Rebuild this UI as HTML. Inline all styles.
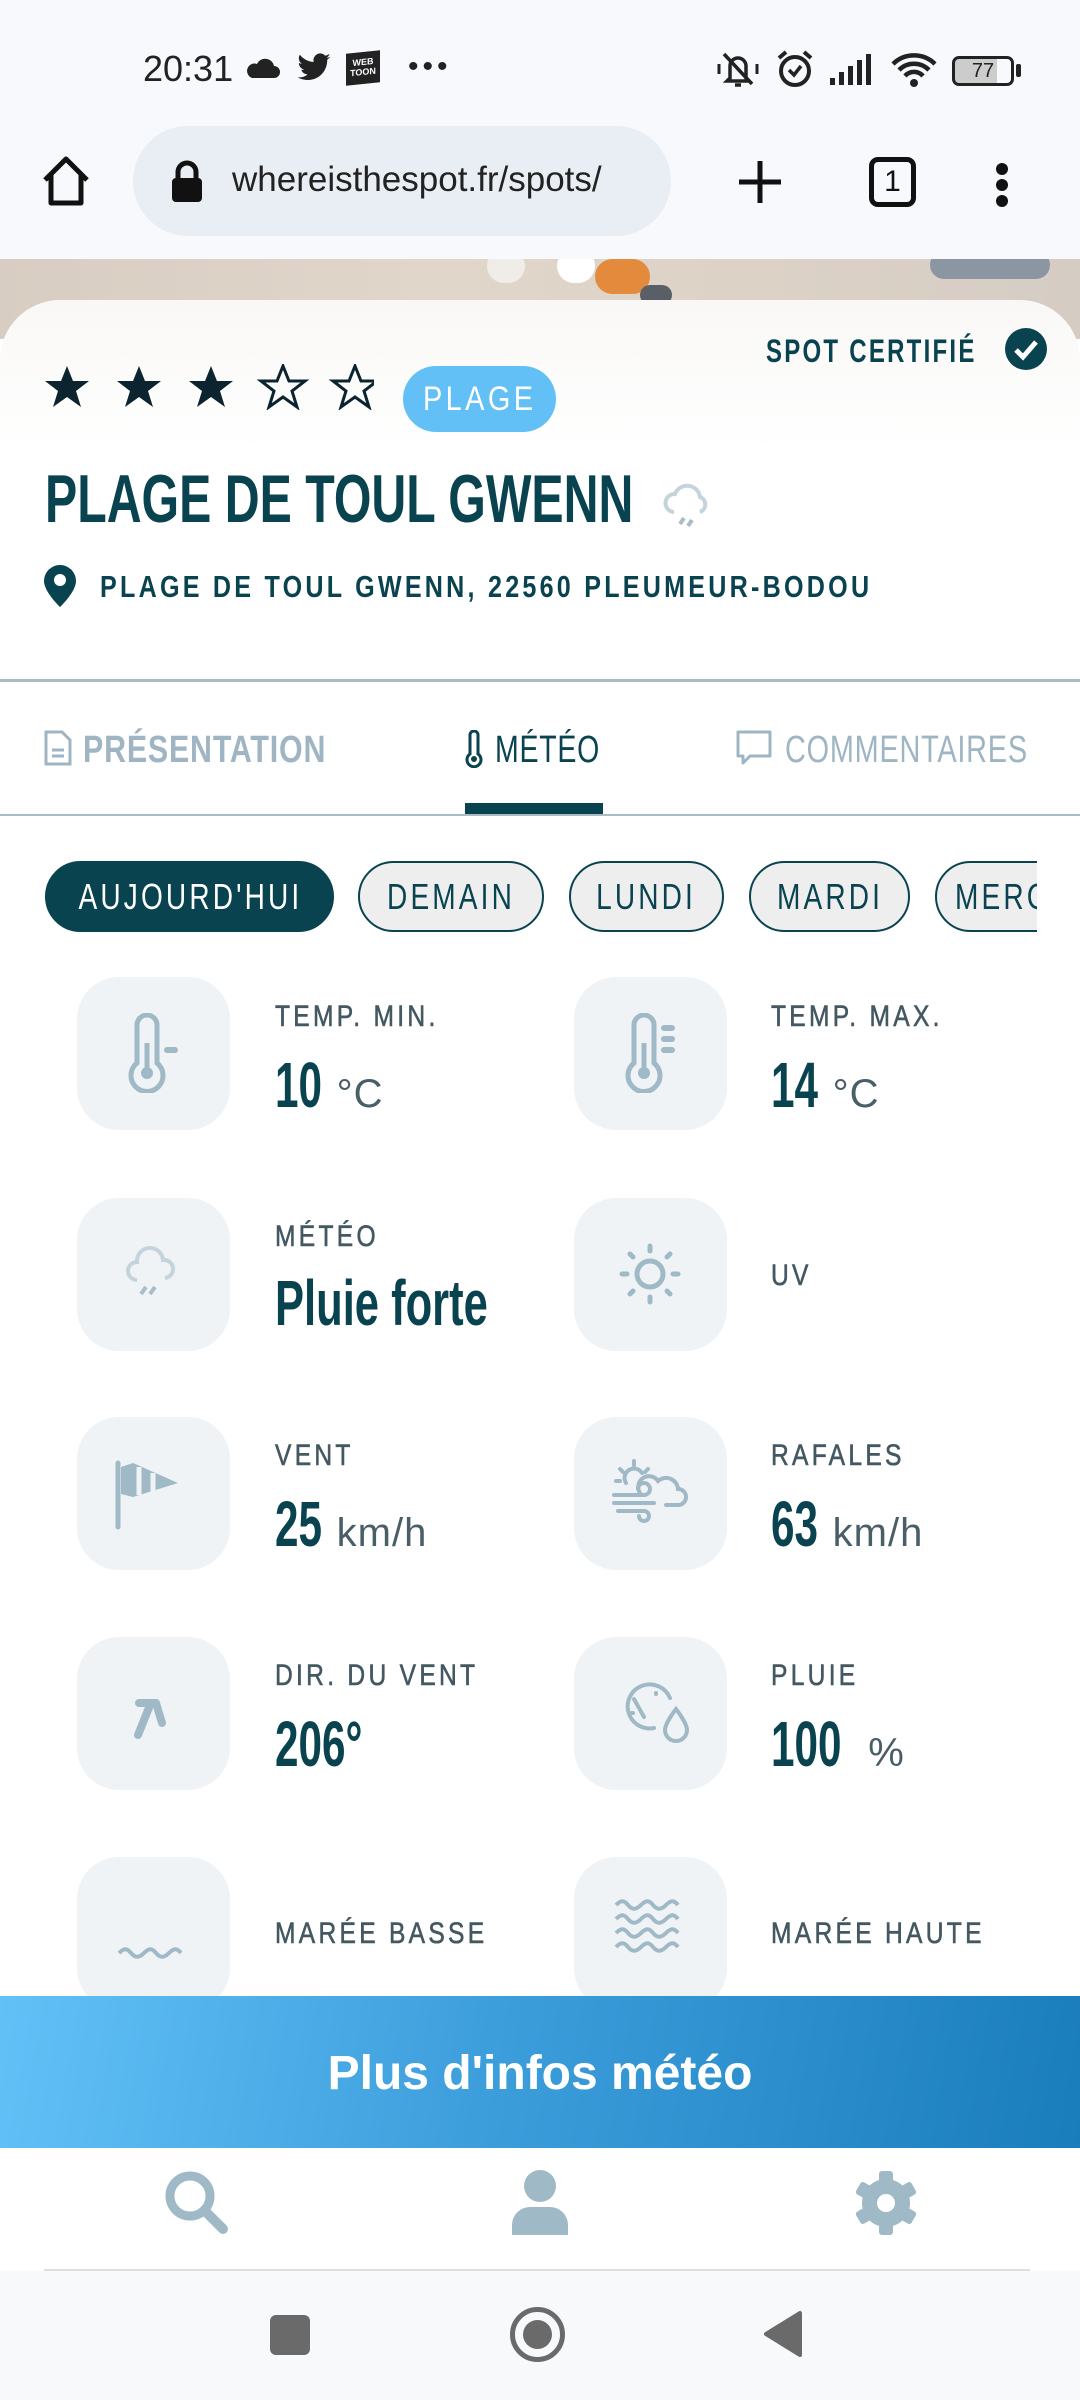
<!DOCTYPE html>
<html><head><meta charset="utf-8">
<style>
*{margin:0;padding:0;box-sizing:border-box}
body{width:1080px;height:2400px;overflow:hidden;background:#fff;font-family:"Liberation Sans",sans-serif;position:relative}
.abs{position:absolute}
.cond{display:inline-block;transform-origin:left center;white-space:nowrap}
.lbl{position:absolute;font-size:30px;color:#445862;letter-spacing:4px;white-space:nowrap;transform:scaleX(.82);transform-origin:left center;-webkit-text-stroke:.6px #445862}
.val{position:absolute;white-space:nowrap;color:#0a4350;font-weight:bold}
.val b{display:inline-block;font-size:64px;transform:scaleX(.66);transform-origin:left center;margin-right:-14px}
.val span{font-weight:normal;color:#4a5e68;font-size:40px;letter-spacing:1px}
.box{position:absolute;width:153px;height:153px;border-radius:42px;background:#eff3f6}
.box svg{position:absolute;left:36px;top:36px}
.chip{position:absolute;top:861px;height:71px;border-radius:36px;border:2px solid #0a4350;background:#eeeeee;color:#0a4350;font-size:36px;letter-spacing:4px;line-height:67px;text-align:center;white-space:nowrap}
.chip i{font-style:normal;display:inline-block;transform:scaleX(.78)}
</style></head><body>
<!-- status bar / header -->
<div class="abs" style="left:0;top:0;width:1080px;height:259px;background:#f8f9fc"></div>
<div class="abs" style="left:143px;top:48px;font-size:36px;color:#222">20:31</div>
<svg class="abs" style="left:244px;top:56px" width="36" height="24" viewBox="0 0 36 24"><path d="M8 22h22a6 6 0 0 0 0-12 9 9 0 0 0-17-2A7 7 0 0 0 8 22z" fill="#222"/></svg>
<svg class="abs" style="left:296px;top:52px" width="36" height="32" viewBox="0 0 24 20"><path d="M23 2.5c-.8.4-1.7.6-2.6.7.9-.6 1.6-1.4 2-2.5-.9.5-1.9.9-2.9 1.1A4.5 4.5 0 0 0 11.8 6 12.8 12.8 0 0 1 2.5 1.2 4.5 4.5 0 0 0 3.9 7.2c-.7 0-1.4-.2-2-.6 0 2.2 1.5 4 3.6 4.5-.7.2-1.4.2-2 .1.6 1.8 2.3 3.1 4.2 3.1A9 9 0 0 1 1 16.2 12.8 12.8 0 0 0 7.9 18c8.3 0 12.9-6.9 12.9-12.9v-.6c.9-.6 1.6-1.4 2.2-2z" fill="#222"/></svg>
<div class="abs" style="left:346px;top:52px;width:34px;height:32px;background:#222;color:#fff;font-size:9px;font-weight:bold;line-height:10px;text-align:center;padding-top:5px;transform:skewY(-6deg)">WEB<br>TOON</div>
<div class="abs" style="left:408px;top:50px;font-size:30px;color:#222;letter-spacing:4px">•••</div>
<svg class="abs" style="left:716px;top:48px" width="44" height="42" viewBox="0 0 44 42"><path d="M14 30V18a8 8 0 0 1 16 0v12l3 3H11z" fill="none" stroke="#222" stroke-width="3.5"/><path d="M8 6l28 30" stroke="#222" stroke-width="3.5"/><path d="M19 37h6" stroke="#222" stroke-width="3.5"/><path d="M3 16v10M41 16v10" stroke="#222" stroke-width="3"/></svg>
<svg class="abs" style="left:774px;top:48px" width="42" height="42" viewBox="0 0 42 42"><circle cx="21" cy="23" r="14" fill="none" stroke="#222" stroke-width="4"/><path d="M15 22l5 5 7-9" fill="none" stroke="#222" stroke-width="3.5"/><path d="M5 10l7-6M37 10l-7-6" stroke="#222" stroke-width="4"/></svg>
<svg class="abs" style="left:828px;top:54px" width="48" height="32" viewBox="0 0 48 32"><rect x="2" y="24" width="5" height="7" fill="#222"/><rect x="11" y="18" width="5" height="13" fill="#222"/><rect x="20" y="12" width="5" height="19" fill="#222"/><rect x="29" y="6" width="5" height="25" fill="#222"/><rect x="38" y="0" width="5" height="31" fill="#222"/></svg>
<svg class="abs" style="left:890px;top:52px" width="48" height="36" viewBox="0 0 48 36"><path d="M3 12a30 30 0 0 1 42 0M9 18a21 21 0 0 1 30 0M15 24a12 12 0 0 1 18 0" fill="none" stroke="#222" stroke-width="4.5"/><circle cx="24" cy="31" r="4" fill="#222"/></svg>
<div class="abs" style="left:952px;top:56px;width:62px;height:30px;border:3px solid #222;border-radius:7px;font-size:20px;text-align:center;line-height:24px;color:#222;background:linear-gradient(90deg,#ccc 75%,transparent 75%)">77</div>
<div class="abs" style="left:1016px;top:64px;width:5px;height:13px;background:#222;border-radius:2px"></div>

<svg class="abs" style="left:40px;top:155px" width="52" height="52" viewBox="0 0 52 52"><path d="M5 25L26 4l21 21M11 20v28h30V20" fill="none" stroke="#111" stroke-width="5" stroke-linejoin="round"/></svg>
<div class="abs" style="left:133px;top:126px;width:538px;height:110px;border-radius:55px;background:#e8eef3"></div>
<svg class="abs" style="left:170px;top:160px" width="34" height="44" viewBox="0 0 34 44"><path d="M8 20v-8a9 9 0 0 1 18 0v8" fill="none" stroke="#111" stroke-width="5"/><rect x="2" y="18" width="30" height="24" rx="4" fill="#111"/></svg>
<div class="abs" style="left:232px;top:160px;font-size:35px;color:#222">whereisthespot.fr/spots/</div>
<svg class="abs" style="left:736px;top:158px" width="48" height="48" viewBox="0 0 48 48"><path d="M24 3v42M3 24h42" stroke="#111" stroke-width="5"/></svg>
<div class="abs" style="left:869px;top:157px;width:47px;height:50px;border:5px solid #111;border-radius:9px;font-size:30px;text-align:center;line-height:40px;color:#111">1</div>
<div class="abs" style="left:996px;top:163px;width:12px;height:12px;border-radius:6px;background:#111;box-shadow:0 16px 0 #111,0 32px 0 #111"></div>

<!-- image strip -->
<div class="abs" style="left:0;top:259px;width:1080px;height:80px;background:linear-gradient(90deg,#d8cdc2,#e0d6ca 40%,#dcd2c6 70%,#d5ccc4);overflow:hidden">
 <div class="abs" style="left:595px;top:0;width:55px;height:35px;border-radius:18px;background:#e48a3c"></div>
 <div class="abs" style="left:640px;top:26px;width:32px;height:20px;border-radius:10px;background:#5a5e66"></div>
 <div class="abs" style="left:930px;top:-8px;width:120px;height:28px;border-radius:14px;background:#8c95a2"></div>
 <div class="abs" style="left:487px;top:-10px;width:38px;height:34px;border-radius:19px;background:#f0ede9"></div>
 <div class="abs" style="left:557px;top:-10px;width:38px;height:34px;border-radius:19px;background:#fff"></div>
</div>
<!-- card -->
<div class="abs" style="left:0;top:300px;width:1080px;height:380px;border-radius:60px 60px 0 0;background:linear-gradient(180deg,#f9f8f6,#fff 40%)"></div>
<div class="abs" style="left:766px;top:333px;font-size:32px;font-weight:bold;color:#0a4350;letter-spacing:3px"><span class="cond" style="transform:scaleX(.75)">SPOT CERTIFIÉ</span></div>
<svg class="abs" style="left:1004px;top:327px" width="44" height="44" viewBox="0 0 44 44"><circle cx="22" cy="22" r="21" fill="#0a4350"/><path d="M12 23l7 7 13-15" fill="none" stroke="#fff" stroke-width="5"/></svg>
<svg class="abs" style="left:44px;top:364px" width="330" height="46" viewBox="0 0 330 46">
<defs><path id="st" d="M23 2l6 15h16l-13 10 5 16-14-10-14 10 5-16L1 17h16z"/></defs>
<use href="#st" fill="#0b2430"/><use href="#st" x="72" fill="#0b2430"/><use href="#st" x="144" fill="#0b2430"/>
<use href="#st" x="216" fill="none" stroke="#0b2430" stroke-width="3"/><use href="#st" x="288" fill="none" stroke="#0b2430" stroke-width="3"/></svg>
<div class="abs" style="left:403px;top:366px;width:153px;height:66px;border-radius:33px;background:#62c0f6;color:#fff;font-size:34px;letter-spacing:4px;text-align:center;line-height:66px"><span class="cond" style="transform:scaleX(.85);transform-origin:center">PLAGE</span></div>
<div class="abs" style="left:45px;top:460px;font-size:68px;font-weight:bold;color:#0a4350"><span class="cond" style="transform:scaleX(.71)">PLAGE DE TOUL GWENN</span></div>
<svg class="abs" style="left:660px;top:478px" width="56" height="56" viewBox="0 0 56 56"><path d="M14 34a9 9 0 0 1 1-18 13 13 0 0 1 25 3 8 8 0 0 1 0 15" fill="none" stroke="#c5d4dc" stroke-width="4"/><path d="M20 46l4-6M28 48l4-6" stroke="#a9bcc7" stroke-width="4"/></svg>
<svg class="abs" style="left:43px;top:564px" width="34" height="44" viewBox="0 0 34 44"><path d="M17 1a16 16 0 0 0-16 16c0 11 16 26 16 26s16-15 16-26A16 16 0 0 0 17 1z" fill="#0a4350"/><circle cx="17" cy="16" r="6" fill="#fff"/></svg>
<div class="abs" style="left:100px;top:569px;font-size:31px;font-weight:bold;color:#0a4350;letter-spacing:4px"><span class="cond" style="transform:scaleX(.81)">PLAGE DE TOUL GWENN, 22560 PLEUMEUR-BODOU</span></div>
<div class="abs" style="left:0;top:679px;width:1080px;height:3px;background:#a9bcc6"></div>

<!-- tabs -->
<svg class="abs" style="left:44px;top:730px" width="28" height="36" viewBox="0 0 28 36"><path d="M2 2h16l8 8v24H2z" fill="none" stroke="#9fb5c3" stroke-width="3"/><path d="M8 20h12M8 26h12" stroke="#9fb5c3" stroke-width="3"/></svg>
<div class="abs" style="left:83px;top:729px;font-size:38px;font-weight:bold;color:#9fb5c3;letter-spacing:1px"><span class="cond" style="transform:scaleX(.8)">PRÉSENTATION</span></div>
<svg class="abs" style="left:464px;top:730px" width="20" height="38" viewBox="0 0 20 38"><path d="M6 24V5a4 4 0 0 1 8 0v19a7 7 0 1 1-8 0z" fill="none" stroke="#0a4350" stroke-width="3"/><circle cx="10" cy="29" r="3" fill="#0a4350"/></svg>
<div class="abs" style="left:495px;top:729px;font-size:38px;color:#0a4350;letter-spacing:1px"><span class="cond" style="transform:scaleX(.75)">MÉTÉO</span></div>
<div class="abs" style="left:465px;top:803px;width:138px;height:11px;background:#0a4350"></div>
<svg class="abs" style="left:736px;top:730px" width="36" height="36" viewBox="0 0 36 36"><path d="M2 2h32v24H14l-7 7v-7H2z" fill="none" stroke="#9fb5c3" stroke-width="3" stroke-linejoin="round"/></svg>
<div class="abs" style="left:785px;top:729px;font-size:38px;color:#9fb5c3;letter-spacing:1px"><span class="cond" style="transform:scaleX(.76)">COMMENTAIRES</span></div>
<div class="abs" style="left:0;top:814px;width:1080px;height:2px;background:#a9bcc6"></div>

<!-- chips -->
<div class="chip" style="left:45px;width:289px;background:#0a4350;color:#fff"><i>AUJOURD'HUI</i></div>
<div class="chip" style="left:358px;width:186px"><i>DEMAIN</i></div>
<div class="chip" style="left:569px;width:155px"><i>LUNDI</i></div>
<div class="chip" style="left:749px;width:161px"><i>MARDI</i></div>
<div class="abs" style="left:935px;top:855px;width:102px;height:85px;overflow:hidden"><div class="chip" style="left:0;top:6px;width:200px;text-align:left;padding-left:18px"><i style="transform-origin:left center">MERCREDI</i></div></div>

<!-- grid -->
<div class="box" style="left:77px;top:977px"><svg width="80" height="80" viewBox="0 0 80 80"><path d="M24 50V12a10 10 0 0 1 20 0v38a16 16 0 1 1-20 0z" fill="none" stroke="#a0b9c7" stroke-width="5"/><path d="M34 30v28" stroke="#a0b9c7" stroke-width="5"/><circle cx="34" cy="60" r="6" fill="#a0b9c7"/><path d="M54 37h8" stroke="#a0b9c7" stroke-width="6" stroke-linecap="round"/></svg></div>
<div class="lbl" style="left:275px;top:1000px">TEMP. MIN.</div>
<div class="val" style="left:275px;top:1048px"><b>10</b> <span>°C</span></div>
<div class="box" style="left:574px;top:977px"><svg width="80" height="80" viewBox="0 0 80 80"><path d="M24 50V12a10 10 0 0 1 20 0v38a16 16 0 1 1-20 0z" fill="none" stroke="#a0b9c7" stroke-width="5"/><path d="M34 30v28" stroke="#a0b9c7" stroke-width="5"/><circle cx="34" cy="60" r="6" fill="#a0b9c7"/><path d="M54 15h8M54 26h8M54 37h8" stroke="#a0b9c7" stroke-width="6" stroke-linecap="round"/></svg></div>
<div class="lbl" style="left:771px;top:1000px">TEMP. MAX.</div>
<div class="val" style="left:771px;top:1048px"><b>14</b> <span>°C</span></div>

<div class="box" style="left:77px;top:1198px"><svg width="80" height="80" viewBox="0 0 80 80"><path d="M24 46a9 9 0 0 1 0-18 13 13 0 0 1 26-2 9 9 0 0 1 2 18" fill="none" stroke="#c5d4dc" stroke-width="4"/><path d="M28 60l5-7M37 60l5-7" stroke="#a9bcc7" stroke-width="4"/></svg></div>
<div class="lbl" style="left:275px;top:1220px">MÉTÉO</div>
<div class="val" style="left:275px;top:1266px"><b style="font-size:64px;transform:scaleX(.68)">Pluie forte</b></div>
<div class="box" style="left:574px;top:1198px"><svg width="80" height="80" viewBox="0 0 80 80"><circle cx="40" cy="40" r="13" fill="none" stroke="#a0b9c7" stroke-width="5"/><g stroke="#a0b9c7" stroke-width="5" stroke-linecap="round"><path d="M40 12v5M40 63v5M12 40h5M63 40h5M20 20l3 3M57 57l3 3M60 20l-3 3M23 57l-3 3"/></g></svg></div>
<div class="lbl" style="left:771px;top:1259px">UV</div>

<div class="box" style="left:77px;top:1417px"><svg width="80" height="80" viewBox="0 0 80 80"><path d="M5 10v64" stroke="#a0b9c7" stroke-width="5" stroke-linecap="round"/><path d="M8 14l12-4 45 20-45 14-12-3z" fill="#a0b9c7"/><path d="M26 14v28M40 20v20" stroke="#eff3f6" stroke-width="5"/></svg></div>
<div class="lbl" style="left:275px;top:1439px">VENT</div>
<div class="val" style="left:275px;top:1487px"><b>25</b> <span>km/h</span></div>
<div class="box" style="left:574px;top:1417px"><svg width="80" height="80" viewBox="0 0 80 80" fill="none" stroke="#a0b9c7" stroke-width="4" stroke-linecap="round"><path d="M30 40a10 10 0 0 1 18-12 12 12 0 0 1 20 8 8 8 0 0 1 0 16H56"/><path d="M4 42h30a6 6 0 1 0-6-6M4 50h40M8 58h26a5 5 0 1 1-5 5"/><path d="M24 8v4M10 16l3 3M38 16l-3 3M6 28h4"/><path d="M16 30a9 9 0 0 1 16-10"/></svg></div>
<div class="lbl" style="left:771px;top:1439px">RAFALES</div>
<div class="val" style="left:771px;top:1487px"><b>63</b> <span>km/h</span></div>

<div class="box" style="left:77px;top:1637px"><svg width="80" height="80" viewBox="0 0 80 80"><path d="M25 62l12-30M26 30h17l6 20" fill="none" stroke="#a0b9c7" stroke-width="8" stroke-linecap="round" stroke-linejoin="round"/></svg></div>
<div class="lbl" style="left:275px;top:1659px">DIR. DU VENT</div>
<div class="val" style="left:275px;top:1707px"><b>206°</b></div>
<div class="box" style="left:574px;top:1637px"><svg width="80" height="80" viewBox="0 0 80 80" fill="none" stroke="#a0b9c7" stroke-width="4" stroke-linecap="round"><path d="M44 55a22 22 0 1 1 16-30"/><path d="M34 44L24 26M22 40h1M46 20v1"/><path d="M66 36s-11 14-11 21a11 11 0 0 0 22 0c0-7-11-21-11-21z"/></svg></div>
<div class="lbl" style="left:771px;top:1659px">PLUIE</div>
<div class="val" style="left:771px;top:1707px"><b>100</b> <span>%</span></div>

<div class="box" style="left:77px;top:1857px"><svg width="80" height="80" viewBox="0 0 80 80"><path d="M6 60c5-5 8-5 12 0s8 5 13 0 8-5 12 0 8 5 13 0 8-5 12 0" fill="none" stroke="#a0b9c7" stroke-width="4"/></svg></div>
<div class="lbl" style="left:275px;top:1917px">MARÉE BASSE</div>
<div class="box" style="left:574px;top:1857px"><svg width="80" height="80" viewBox="0 0 80 80"><g fill="none" stroke="#a0b9c7" stroke-width="4"><path d="M6 12c5-5 8-5 12 0s8 5 13 0 8-5 12 0 8 5 13 0 8-5 12 0"/><path d="M6 26c5-5 8-5 12 0s8 5 13 0 8-5 12 0 8 5 13 0 8-5 12 0"/><path d="M6 40c5-5 8-5 12 0s8 5 13 0 8-5 12 0 8 5 13 0 8-5 12 0"/><path d="M6 54c5-5 8-5 12 0s8 5 13 0 8-5 12 0 8 5 13 0 8-5 12 0"/></g></svg></div>
<div class="lbl" style="left:771px;top:1917px">MARÉE HAUTE</div>

<!-- button -->
<div class="abs" style="left:0;top:1996px;width:1080px;height:152px;background:linear-gradient(100deg,#62c1f7 0%,#3d9edc 45%,#1a7dbb 100%);color:#fff;font-size:48px;font-weight:bold;text-align:center;line-height:156px">Plus d'infos météo</div>
<!-- bottom nav -->
<div class="abs" style="left:0;top:2148px;width:1080px;height:122px;background:#fff"></div>
<svg class="abs" style="left:162px;top:2168px" width="70" height="70" viewBox="0 0 70 70"><circle cx="28" cy="28" r="20" fill="none" stroke="#a0b9c7" stroke-width="9"/><path d="M43 43l18 18" stroke="#a0b9c7" stroke-width="10" stroke-linecap="round"/></svg>
<svg class="abs" style="left:510px;top:2169px" width="60" height="68" viewBox="0 0 60 68"><circle cx="30" cy="17" r="16" fill="#a0b9c7"/><path d="M2 66v-10a18 18 0 0 1 18-18h20a18 18 0 0 1 18 18v10z" fill="#a0b9c7"/></svg>
<svg class="abs" style="left:853px;top:2170px" width="66" height="66" viewBox="0 0 66 66"><g fill="#a0b9c7"><circle cx="33" cy="33" r="24"/><g id="t"><rect x="26" y="1" width="14" height="16" rx="3"/><rect x="26" y="49" width="14" height="16" rx="3"/></g><use href="#t" transform="rotate(60 33 33)"/><use href="#t" transform="rotate(120 33 33)"/></g><circle cx="33" cy="33" r="9" fill="#fff"/></svg>
<div class="abs" style="left:44px;top:2269px;width:986px;height:2px;background:#dcdfe2"></div>
<div class="abs" style="left:0;top:2271px;width:1080px;height:129px;background:#f8f9fb"></div>
<div class="abs" style="left:270px;top:2315px;width:40px;height:40px;border-radius:6px;background:#6a6a6a"></div>
<div class="abs" style="left:510px;top:2307px;width:55px;height:55px;border-radius:50%;border:5px solid #6a6a6a"></div>
<div class="abs" style="left:523px;top:2320px;width:29px;height:29px;border-radius:50%;background:#6a6a6a"></div>
<svg class="abs" style="left:762px;top:2310px" width="42" height="48" viewBox="0 0 42 48"><path d="M38 3v42L4 24z" fill="#6a6a6a" stroke="#6a6a6a" stroke-width="4" stroke-linejoin="round"/></svg>
</body></html>
